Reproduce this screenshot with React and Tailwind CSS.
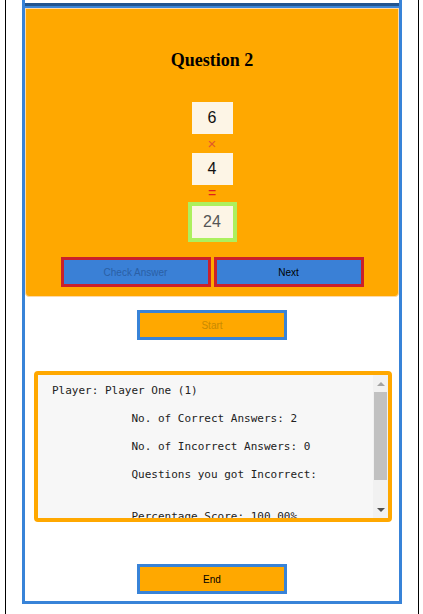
import React from "react";

const report = [
  "Player: Player One (1)",
  "",
  "            No. of Correct Answers: 2",
  "",
  "            No. of Incorrect Answers: 0",
  "",
  "            Questions you got Incorrect:",
  "",
  "",
  "            Percentage Score: 100.00%",
];

const NumberBox = ({ value }) => (
  <div className="w-[41px] h-[32px] bg-[#fdf5e6] flex items-center justify-center text-[16px] text-[#111]">
    {value}
  </div>
);

const Scrollbar = () => (
  <div className="w-[15px] bg-[#f1f1f1] flex flex-col items-center">
    <div className="h-[17px] w-full flex items-center justify-center">
      <div className="w-0 h-0 border-x-[4px] border-x-transparent border-b-[4px] border-b-[#a3a3a3]" />
    </div>
    <div className="h-[88px] w-[13px] bg-[#c1c1c1]" />
    <div className="flex-1" />
    <div className="h-[17px] w-full flex items-center justify-center">
      <div className="w-0 h-0 border-x-[4px] border-x-transparent border-t-[4px] border-t-[#505050]" />
    </div>
  </div>
);

export default function App() {
  return (
    <div className="min-h-[614px] bg-white font-['Liberation_Sans',Arial,sans-serif]">
      <div className="ml-[5px] w-[414px] min-h-[614px] border-x border-black">
        <div className="mx-[16px] border-x-[3px] border-b-[3px] border-[#3883d8] pb-[7px]">
          <div className="h-[3px] bg-white" />
          <div className="h-[3px] bg-[#23558f]" />
          <div className="h-[2px] bg-[#3c86d8]" />

          {/* question panel */}
          <div className="bg-[#ffa800] border border-[#fcd9a8] rounded-b-[4px] pt-[39px] pb-[9px] flex flex-col items-center">
            <h2 className="h-[24px] leading-[24px] text-[18px] font-bold text-black font-['Liberation_Serif','Times_New_Roman',serif]">
              Question 2
            </h2>
            <div className="mt-[30px] flex flex-col items-center">
              <NumberBox value="6" />
              <div className="h-[19px] leading-[19px] text-[15px] text-[#e2582c]">×</div>
              <NumberBox value="4" />
              <div className="h-[17px] leading-[17px] text-[14px] text-[#e0201c]">=</div>
              <div className="w-[49px] h-[40px] border-4 border-[#adf05e] bg-[#fdf5e6] flex items-center justify-center text-[16px] text-[#555]">
                24
              </div>
            </div>
            <div className="mt-[15px] flex gap-[3px]">
              <button className="w-[150px] h-[30px] border-[3px] border-[#c9202c] bg-[#3a80d6] text-[10px] text-[#2a5fa5]">
                Check Answer
              </button>
              <button className="w-[150px] h-[30px] border-[3px] border-[#c9202c] bg-[#3a80d6] text-[10px] text-black">
                Next
              </button>
            </div>
          </div>

          <div className="mt-[13px] flex justify-center">
            <button className="w-[150px] h-[30px] border-[3px] border-[#3883d8] bg-[#ffa800] text-[10px] text-[#c98a00]">
              Start
            </button>
          </div>

          {/* results */}
          <div className="mt-[31px] ml-[9px] w-[358px] h-[151px] border-4 border-[#ffa800] rounded-[4px] bg-[#f7f7f7] flex overflow-hidden">
            <div className="flex-1 pl-[14px] pt-[9px] overflow-hidden">
              {report.map((line, i) => (
                <div
                  key={i}
                  className="h-[14px] leading-[14px] whitespace-pre text-[11px] text-[#222] font-['DejaVu_Sans_Mono','Liberation_Mono',monospace]"
                >
                  {line}
                </div>
              ))}
            </div>
            <Scrollbar />
          </div>

          <div className="mt-[42px] flex justify-center">
            <button className="w-[150px] h-[30px] border-[3px] border-[#3883d8] bg-[#ffa800] text-[10px] text-black">
              End
            </button>
          </div>
        </div>
      </div>
    </div>
  );
}
